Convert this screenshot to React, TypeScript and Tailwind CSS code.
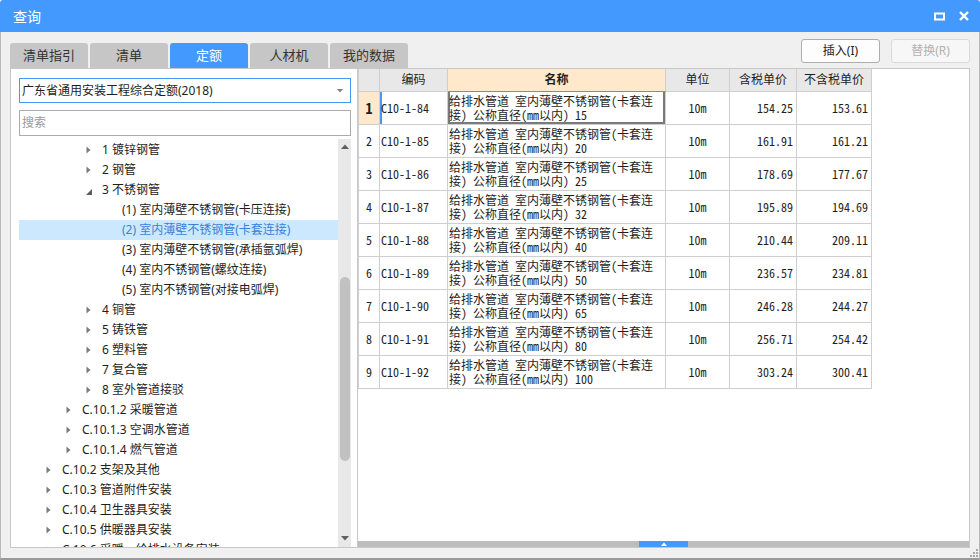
import React from "react";

const ui = "font-['Noto_Sans','Noto_Sans_CJK_SC',sans-serif]";
const mono = "font-['Noto_Sans_Mono_CJK_SC','Liberation_Mono','Noto_Sans_CJK_SC',monospace]";

type Node = { level: 1 | 2 | 3 | 4; label: string; state: "open" | "closed" | "leaf"; selected?: boolean };

const tree: Node[] = [
  { level: 3, label: "1 镀锌钢管", state: "closed" },
  { level: 3, label: "2 钢管", state: "closed" },
  { level: 3, label: "3 不锈钢管", state: "open" },
  { level: 4, label: "(1) 室内薄壁不锈钢管(卡压连接)", state: "leaf" },
  { level: 4, label: "(2) 室内薄壁不锈钢管(卡套连接)", state: "leaf", selected: true },
  { level: 4, label: "(3) 室内薄壁不锈钢管(承插氩弧焊)", state: "leaf" },
  { level: 4, label: "(4) 室内不锈钢管(螺纹连接)", state: "leaf" },
  { level: 4, label: "(5) 室内不锈钢管(对接电弧焊)", state: "leaf" },
  { level: 3, label: "4 铜管", state: "closed" },
  { level: 3, label: "5 铸铁管", state: "closed" },
  { level: 3, label: "6 塑料管", state: "closed" },
  { level: 3, label: "7 复合管", state: "closed" },
  { level: 3, label: "8 室外管道接驳", state: "closed" },
  { level: 2, label: "C.10.1.2 采暖管道", state: "closed" },
  { level: 2, label: "C.10.1.3 空调水管道", state: "closed" },
  { level: 2, label: "C.10.1.4 燃气管道", state: "closed" },
  { level: 1, label: "C.10.2 支架及其他", state: "closed" },
  { level: 1, label: "C.10.3 管道附件安装", state: "closed" },
  { level: 1, label: "C.10.4 卫生器具安装", state: "closed" },
  { level: 1, label: "C.10.5 供暖器具安装", state: "closed" },
  { level: 1, label: "C.10.6 采暖、给排水设备安装", state: "closed" },
];

const indent: Record<number, string> = {
  1: "pl-[27px]",
  2: "pl-[47px]",
  3: "pl-[67px]",
  4: "pl-[87px]",
};

const rows = [
  ["C10-1-84", "15", "154.25", "153.61"],
  ["C10-1-85", "20", "161.91", "161.21"],
  ["C10-1-86", "25", "178.69", "177.67"],
  ["C10-1-87", "32", "195.89", "194.69"],
  ["C10-1-88", "40", "210.44", "209.11"],
  ["C10-1-89", "50", "236.57", "234.81"],
  ["C10-1-90", "65", "246.28", "244.27"],
  ["C10-1-91", "80", "256.71", "254.42"],
  ["C10-1-92", "100", "303.24", "300.41"],
];

const tabs = ["清单指引", "清单", "定额", "人材机", "我的数据"];

const Caret = ({ state }: { state: Node["state"] }) => {
  if (state === "closed")
    return (
      <svg width="5" height="8" viewBox="0 0 5 8">
        <polygon points="0.5,0.5 4.5,4 0.5,7.5" fill="#7a7a7a" />
      </svg>
    );
  if (state === "open")
    return (
      <svg width="6" height="6" viewBox="0 0 6 6" className="mt-[3px]">
        <polygon points="6,0 6,6 0,6" fill="#5c5c5c" />
      </svg>
    );
  return null;
};

const TreeRow = ({ node }: { node: Node }) => (
  <div
    className={`h-[20px] flex items-center whitespace-nowrap text-[12px] ${indent[node.level]} ${
      node.selected ? "bg-[#cce8ff] text-[#3c7fd8]" : "text-[#1e1e1e]"
    }`}
  >
    <span className="w-[16px] flex items-center">
      <Caret state={node.state} />
    </span>
    <span>{node.label}</span>
  </div>
);

export default function App() {
  return (
    <div className={`w-[980px] h-[560px] flex flex-col overflow-hidden ${ui}`}>
      {/* title bar */}
      <div className="h-[32px] bg-[#4499ff] rounded-t-[3px] flex items-center justify-between pl-[13px] pr-[11px] text-white">
        <span className="text-[14px]">查询</span>
        <div className="flex items-center gap-[14px]">
          <svg width="11" height="9" viewBox="0 0 11 9">
            <rect x="1" y="1.5" width="9" height="6" fill="none" stroke="white" strokeWidth="2" />
          </svg>
          <svg width="10" height="10" viewBox="0 0 10 10">
            <path d="M1 1 L9 9 M9 1 L1 9" stroke="white" strokeWidth="2.4" />
          </svg>
        </div>
      </div>

      <div className="relative flex-1 flex flex-col bg-[#f0f0f0] border-x border-b-2 border-x-[#b8b8b8] border-b-[#9a9a9a] px-[9px]">
        {/* toolbar */}
        <div className="h-[36px] flex justify-between">
          <div className="flex items-end gap-[2px]">
            {tabs.map((t) => (
              <div
                key={t}
                className={`w-[78px] h-[25px] rounded-t-[3px] flex items-center justify-center text-[13px] ${
                  t === "定额" ? "bg-[#4499ff] text-white" : "bg-[#c6c6c6] text-[#333]"
                }`}
              >
                {t}
              </div>
            ))}
          </div>
          <div className="flex gap-[11px] pt-[7px]">
            <button className="w-[79px] h-[24px] bg-[#fdfdfd] border border-[#adadad] rounded-[3px] text-[12px] text-[#222]">
              插入(I)
            </button>
            <button className="w-[79px] h-[24px] bg-[#f7f7f7] border border-[#dadada] rounded-[3px] text-[12px] text-[#b2b2b2]">
              替换(R)
            </button>
          </div>
        </div>

        {/* main panel */}
        <div className="h-[480px] flex bg-white border border-[#c8c8c8]">
          {/* left */}
          <div className="w-[347px] flex flex-col border-r border-[#c8c8c8] pt-[9px]">
            <div className="ml-[8px] w-[332px] h-[25px] border border-[#4499ff] flex items-center justify-between pl-[2px] pr-[7px] text-[12px] text-[#1e1e1e]">
              <span>广东省通用安装工程综合定额(2018)</span>
              <svg width="6" height="4" viewBox="0 0 6 4">
                <polygon points="0,0 6,0 3,3.5" fill="#808080" />
              </svg>
            </div>
            <div className="ml-[8px] mt-[7px] w-[332px] h-[26px] border border-[#ababab] flex items-center pl-[2px] text-[12px] text-[#9a9a9a]">
              搜索
            </div>
            <div className="mt-[3px] flex-1 flex pl-[8px] pr-[6px] overflow-hidden">
              <div className="flex-1 pt-[1px] overflow-hidden">
                {tree.map((n) => (
                  <TreeRow key={n.label} node={n} />
                ))}
              </div>
              <div className="w-[13px] bg-[#e8e8e8] flex flex-col items-center">
                <div className="h-[10px] flex items-end">
                  <svg width="8" height="5" viewBox="0 0 8 5">
                    <polygon points="0,5 8,5 4,0.5" fill="#606060" />
                  </svg>
                </div>
                <div className="mt-[128px] w-[10px] h-[184px] rounded-full bg-[#c1c1c1]" />
                <div className="flex-1" />
                <div className="h-[10px] mb-[1px] flex items-start">
                  <svg width="8" height="5" viewBox="0 0 8 5">
                    <polygon points="0,0 8,0 4,4.5" fill="#606060" />
                  </svg>
                </div>
              </div>
            </div>
          </div>

          {/* right */}
          <div className="flex-1 flex flex-col">
            <div className="flex-1 overflow-hidden">
              <div className="grid grid-cols-[22px_68px_218px_64px_67px_75px] w-max text-[12px] text-[#1e1e1e]">
                <div className="h-[23px] bg-[#e8e8e8] border-l border-r border-b border-[#cfcfcf]" />
                <div className="h-[23px] bg-[#e8e8e8] border-r border-b border-[#cfcfcf] flex items-center justify-center">编码</div>
                <div className="h-[23px] bg-[#ffe8cc] border-r border-b border-[#cfcfcf] border-b-[#4499ff] flex items-center justify-center font-bold">名称</div>
                <div className="h-[23px] bg-[#e8e8e8] border-r border-b border-[#cfcfcf] flex items-center justify-center">单位</div>
                <div className="h-[23px] bg-[#e8e8e8] border-r border-b border-[#cfcfcf] flex items-center justify-center">含税单价</div>
                <div className="h-[23px] bg-[#e8e8e8] border-r border-b border-[#cfcfcf] flex items-center justify-center">不含税单价</div>

                {rows.map(([code, dia, p1, p2], i) => {
                  const first = i === 0;
                  return (
                    <React.Fragment key={code}>
                      <div
                        className={`h-[33px] border-l border-r border-b border-[#cfcfcf] flex items-center justify-center ${mono} ${
                          first ? "bg-[#ffe8cc] font-bold font-['Liberation_Serif',serif] text-[14px]" : ""
                        }`}
                      >
                        {i + 1}
                      </div>
                      <div
                        className={`h-[33px] border-r border-b border-[#cfcfcf] flex items-center pl-[1px] ${mono} ${
                          first ? "shadow-[inset_2px_0_0_#4499ff]" : ""
                        }`}
                      >
                        {code}
                      </div>
                      <div
                        className={`h-[33px] border-r border-b border-[#cfcfcf] flex flex-col justify-center pl-[1px] leading-[14px] whitespace-nowrap ${mono} ${
                          first ? "shadow-[inset_2px_0_0_#7a7a7a,inset_-2px_0_0_#7a7a7a,inset_0_-2px_0_#7a7a7a]" : ""
                        }`}
                      >
                        <span>给排水管道 室内薄壁不锈钢管(卡套连</span>
                        <span>接) 公称直径(mm以内) {dia}</span>
                      </div>
                      <div className={`h-[33px] border-r border-b border-[#cfcfcf] flex items-center justify-center ${mono}`}>10m</div>
                      <div className={`h-[33px] border-r border-b border-[#cfcfcf] flex items-center justify-end pr-[3px] ${mono}`}>{p1}</div>
                      <div className={`h-[33px] border-r border-b border-[#cfcfcf] flex items-center justify-end pr-[3px] ${mono}`}>{p2}</div>
                    </React.Fragment>
                  );
                })}
              </div>
            </div>
            <div className="h-[6px] bg-[#bdbdbd] flex justify-center">
              <div className="w-[49px] h-[6px] bg-[#4499ff] flex items-center justify-center">
                <svg width="6" height="4" viewBox="0 0 6 4">
                  <polygon points="0,4 6,4 3,0.5" fill="white" />
                </svg>
              </div>
            </div>
          </div>
        </div>

        <div className="h-[10px]" />
        <svg className="absolute right-[1px] bottom-[1px]" width="9" height="9" viewBox="0 0 9 9">
          <rect x="7" y="1" width="2" height="2" fill="#a8a8a8" />
          <rect x="4" y="4" width="2" height="2" fill="#a8a8a8" />
          <rect x="7" y="4" width="2" height="2" fill="#a8a8a8" />
          <rect x="1" y="7" width="2" height="2" fill="#a8a8a8" />
          <rect x="4" y="7" width="2" height="2" fill="#a8a8a8" />
          <rect x="7" y="7" width="2" height="2" fill="#a8a8a8" />
        </svg>
      </div>
    </div>
  );
}
